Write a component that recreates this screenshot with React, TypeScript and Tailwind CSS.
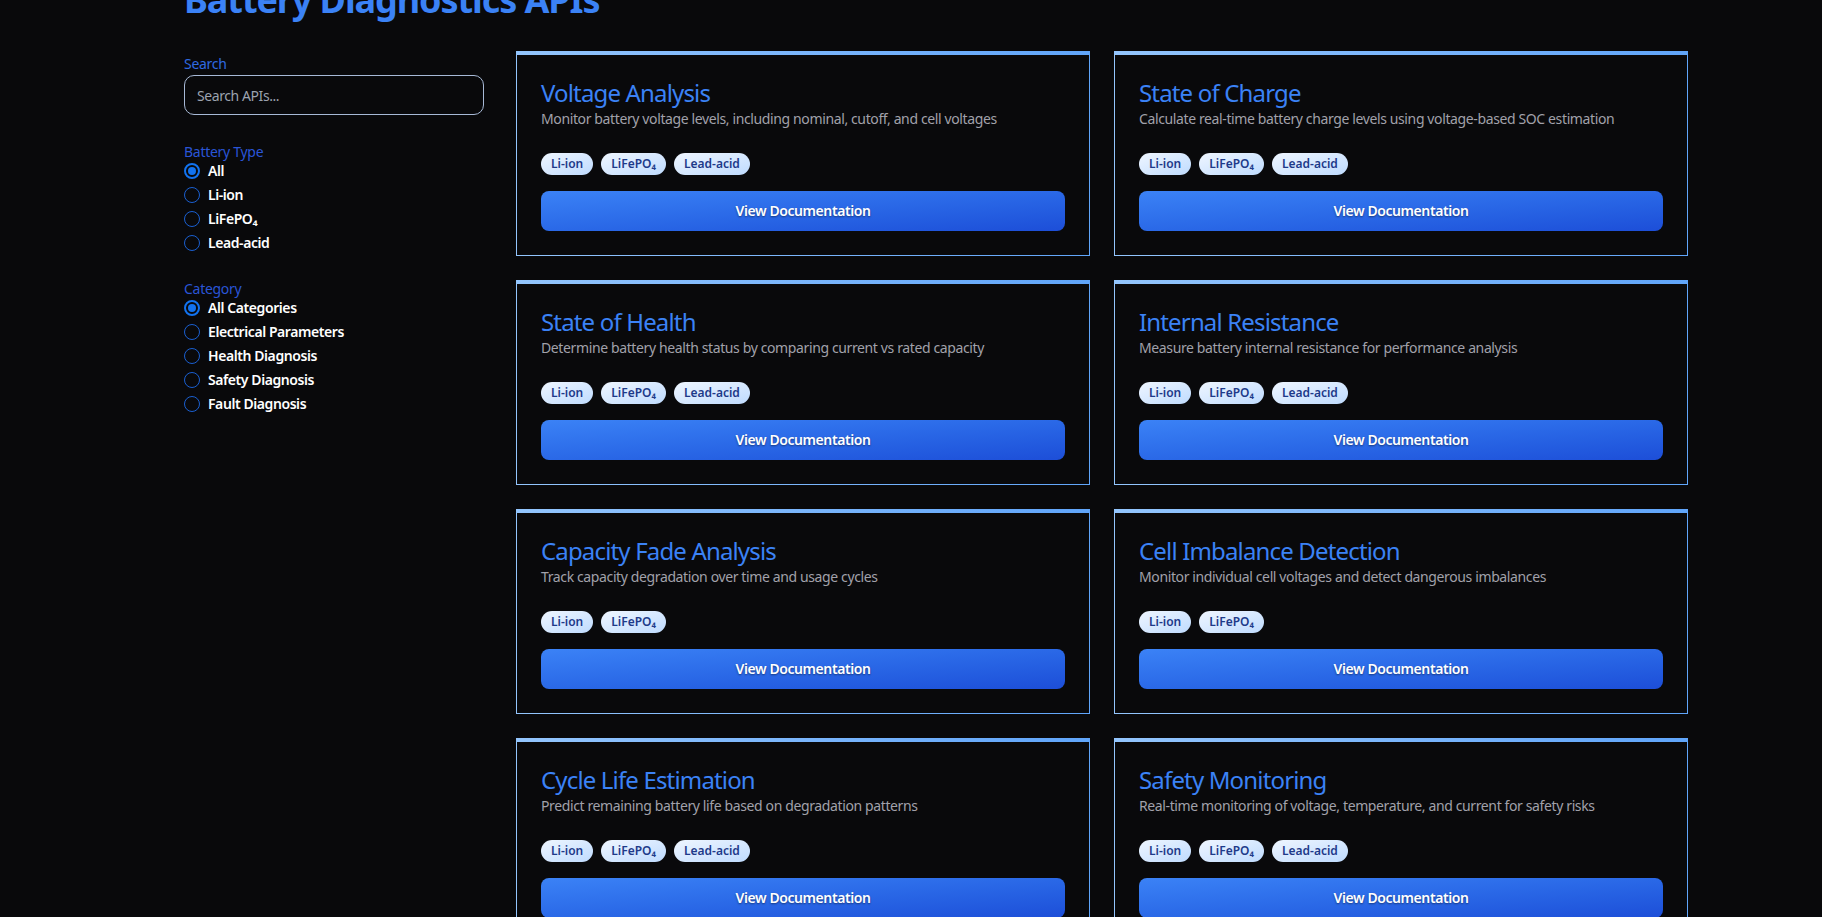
import React from "react";

type Api = { title: string; desc: string; tags: string[] };

const ALL3 = ["Li-ion", "LiFePO₄", "Lead-acid"];
const TWO = ["Li-ion", "LiFePO₄"];

const apis: Api[] = [
  { title: "Voltage Analysis", desc: "Monitor battery voltage levels, including nominal, cutoff, and cell voltages", tags: ALL3 },
  { title: "State of Charge", desc: "Calculate real-time battery charge levels using voltage-based SOC estimation", tags: ALL3 },
  { title: "State of Health", desc: "Determine battery health status by comparing current vs rated capacity", tags: ALL3 },
  { title: "Internal Resistance", desc: "Measure battery internal resistance for performance analysis", tags: ALL3 },
  { title: "Capacity Fade Analysis", desc: "Track capacity degradation over time and usage cycles", tags: TWO },
  { title: "Cell Imbalance Detection", desc: "Monitor individual cell voltages and detect dangerous imbalances", tags: TWO },
  { title: "Cycle Life Estimation", desc: "Predict remaining battery life based on degradation patterns", tags: ALL3 },
  { title: "Safety Monitoring", desc: "Real-time monitoring of voltage, temperature, and current for safety risks", tags: ALL3 },
];

function Radio({ label, checked }: { label: string; checked?: boolean }) {
  return (
    <label className="flex h-6 items-center gap-2 cursor-pointer">
      {checked ? (
        <span className="flex h-4 w-4 items-center justify-center rounded-full border-2 border-[#1273f0]">
          <span className="h-2 w-2 rounded-full bg-[#1273f0]" />
        </span>
      ) : (
        <span className="h-4 w-4 rounded-full border-[1.5px] border-[#1a5fd0]" />
      )}
      <span className="text-sm font-semibold tracking-[-0.03em] text-white">{label}</span>
    </label>
  );
}

function Card({ api }: { api: Api }) {
  return (
    <div className="bg-gradient-to-r from-[#93c5fd] to-[#60a5fa] px-px pb-px pt-1">
      <div className="flex h-[200px] flex-col bg-[#09090b] p-6">
        <h3 className="mt-0.5 text-2xl leading-6 tracking-[-0.035em] text-[#3b82f6]">{api.title}</h3>
        <p className="mt-1 text-sm leading-5 tracking-[-0.027em] text-[#a1a1aa]">{api.desc}</p>
        <div className="mt-6 flex gap-2">
          {api.tags.map((t) => (
            <span
              key={t}
              className="flex h-[22px] items-center rounded-full bg-gradient-to-br from-[#eff6ff] to-[#bfdbfe] px-2.5 text-xs font-semibold text-[#1e3a8a]"
            >
              {t}
            </span>
          ))}
        </div>
        <button className="mt-4 h-10 w-full rounded-lg bg-gradient-to-br from-[#3b82f6] to-[#1d4ed8] text-sm font-semibold tracking-[-0.03em] text-white [text-shadow:0_1px_2px_rgba(0,0,0,0.45)]">
          View Documentation
        </button>
      </div>
    </div>
  );
}

export default function App() {
  return (
    <div
      className="min-h-screen bg-[#09090b] text-white"
      style={{ fontFamily: '"Noto Sans", "Open Sans", sans-serif' }}
    >
      <div className="pl-[184px] pr-[134px] pb-10">
        <h1 className="-mt-[20px] text-4xl font-bold leading-10 tracking-[-0.03em] text-[#3b82f6]">
          Battery Diagnostics APIs
        </h1>
        <div className="mt-[31px] flex gap-8">
          <aside className="flex w-[300px] shrink-0 flex-col pt-[3px]">
            <div className="flex flex-col">
              <span className="text-sm leading-5 tracking-[-0.02em] text-[#2f6ae0]">Search</span>
              <input
                className="mt-px h-10 w-full rounded-[10px] border border-[#a7b9d6] bg-transparent px-3 text-sm tracking-[-0.03em] text-white outline-none placeholder:text-[#9ca3af]"
                placeholder="Search APIs..."
              />
            </div>
            <div className="mt-[27px] flex flex-col">
              <span className="-mb-[3px] text-sm leading-5 tracking-[-0.02em] text-[#2a55d6]">Battery Type</span>
              <Radio label="All" checked />
              <Radio label="Li-ion" />
              <Radio label="LiFePO₄" />
              <Radio label="Lead-acid" />
            </div>
            <div className="mt-6 flex flex-col">
              <span className="-mb-[3px] text-sm leading-5 tracking-[-0.02em] text-[#2a55d6]">Category</span>
              <Radio label="All Categories" checked />
              <Radio label="Electrical Parameters" />
              <Radio label="Health Diagnosis" />
              <Radio label="Safety Diagnosis" />
              <Radio label="Fault Diagnosis" />
            </div>
          </aside>
          <main className="grid flex-1 grid-cols-2 gap-6">
            {apis.map((a) => (
              <Card key={a.title} api={a} />
            ))}
          </main>
        </div>
      </div>
    </div>
  );
}
